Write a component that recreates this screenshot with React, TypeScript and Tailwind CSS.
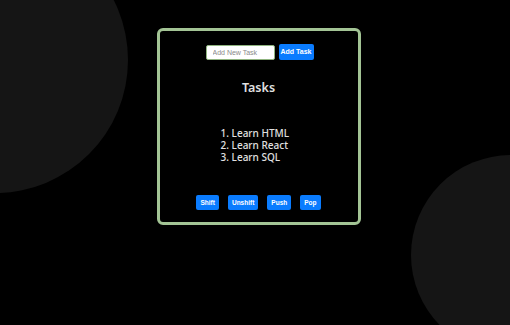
const tasks = ["Learn HTML", "Learn React", "Learn SQL"];
const actions = ["Shift", "Unshift", "Push", "Pop"];

export default function App() {
  return (
    <div className="relative h-[325px] w-[510px] overflow-hidden bg-black font-['Noto_Sans',sans-serif]">
      {/* background blobs */}
      <div className="absolute left-[-138px] top-[-73px] h-[266px] w-[266px] rounded-full bg-[#151515]" />
      <div className="absolute left-[411px] top-[155px] h-[200px] w-[200px] rounded-full bg-[#151515]" />

      <div className="relative flex justify-center pl-[7px] pt-[28px]">
        <div className="flex h-[197px] w-[204px] flex-col items-center rounded-[6px] border-[3px] border-[#a3c495] bg-black pt-[13px]">
          <div className="flex translate-x-[1px] items-center gap-[4px]">
            <input
              placeholder="Add New Task"
              className="h-[15px] w-[69px] rounded-[2px] border border-[#8fb47f] bg-white px-[6px] font-['Liberation_Sans',sans-serif] text-[7px] text-black outline-none placeholder:text-[#8a8a8a]"
            />
            <button className="h-[16px] rounded-[2px] bg-[#0a7cff] px-[2px] font-['Liberation_Sans',sans-serif] text-[7px] font-bold text-white">
              Add Task
            </button>
          </div>

          <h2 className="mt-[19px] text-[12.5px] font-semibold leading-[18px] text-[#e0e0e0]">Tasks</h2>

          <ol className="mt-[30px] w-[76px] text-[10px] font-medium leading-[12px] text-[#e0e0e0]">
            {tasks.map((t, i) => (
              <li key={t} className="whitespace-nowrap">
                {i + 1}. {t}
              </li>
            ))}
          </ol>

          <div className="mt-[32px] flex gap-[9px]">
            {actions.map((a) => (
              <button
                key={a}
                className="h-[15px] rounded-[2px] bg-[#0a7cff] px-[4px] font-['Liberation_Sans',sans-serif] text-[6.5px] font-bold text-white"
              >
                {a}
              </button>
            ))}
          </div>
        </div>
      </div>
    </div>
  );
}
